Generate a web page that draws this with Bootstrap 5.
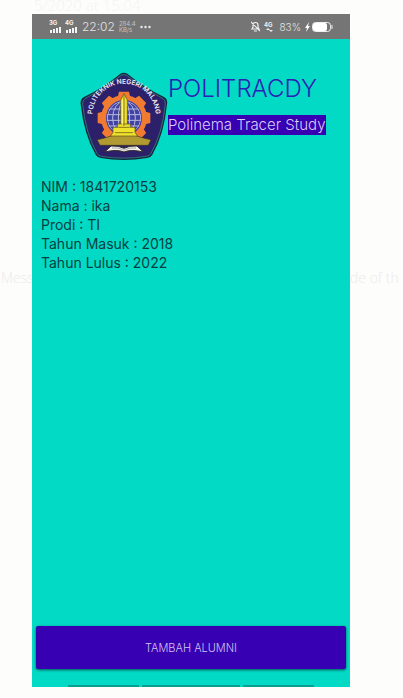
<!DOCTYPE html>
<html lang="id">
<head>
<meta charset="utf-8">
<meta name="viewport" content="width=device-width, initial-scale=1">
<title>Politracdy</title>
<link href="https://cdn.jsdelivr.net/npm/bootstrap@5.3.0/dist/css/bootstrap.min.css" rel="stylesheet">
<style>
  body { background: #fdfdfc; font-family: Inter, "Liberation Sans", sans-serif; color: #063f42; }
  .page { padding: 14px 0 11px; }
  .wall-top { position: absolute; top: -5px; left: 34px; font: 300 15px/20px "Open Sans", sans-serif; color: #f4f4f4; }
  .gutter { font: 300 14px/20px "Open Sans", sans-serif; color: #ececec; padding-top: 254px; white-space: nowrap; overflow: hidden; }
  .gutter-start { width: 32px; padding-left: 1px; }
  .gutter-end { width: 53px; }
  .phone { background: #03dac5; min-width: 0; }
  .status { background: #757575; color: #e4e4e4; height: 25px; padding: 0 17px; font-size: 11px; line-height: 16px; }
  .clock { font-size: 12px; font-weight: 300; }
  .rate { font-size: 6px; line-height: 6px; color: #c4c4c4; }
  .battery { font-size: 10px; font-weight: 300; }
  .brand { padding: 32px 16px 0 47px; }
  .brand-text { padding-top: 4px; margin-left: -1px; }
  .brand h1 { font-size: 24px; line-height: 28px; font-weight: 300; color: #2c20b5; margin: 0 0 12px; }
  .tagline { background: #3700b3; color: #d9cdf5; font-size: 15px; line-height: 20px; font-weight: 300; margin: 0; white-space: nowrap; }
  .facts { padding: 16px 9px; font-size: 14px; line-height: 19px; font-weight: 400; }
  .add { background: #3700b3; color: #d3c5f0; height: 43px; font-size: 11px; line-height: 16px; font-weight: 300; border: 0; border-radius: 2px; box-shadow: 0 1px 3px #00504f; margin: 0 4px 16px; }
  .add:hover { background: #4310bd; color: #fff; }
  .next-row { height: 2px; padding: 0 36px; gap: 3px; }
  .next-row span { background: #079f91; flex: 8 1 0; }
  .next-row .wide { flex-grow: 11; }
</style>
<script src="https://cdn.jsdelivr.net/npm/bootstrap@5.3.0/dist/js/bootstrap.bundle.min.js"></script>
</head>
<body>
<div class="wall-top" aria-hidden="true">5/2020 at 15:04</div>
<div class="page d-flex min-vh-100 position-relative">
  <div class="gutter gutter-start flex-shrink-0" aria-hidden="true">Mess</div>
  <main class="phone d-flex flex-column flex-grow-1">
    <div class="status d-flex align-items-center justify-content-between">
      <div class="d-flex align-items-center gap-1">
        <svg width="29" height="14" viewBox="0 0 29 14" fill="#f4f4f4" aria-hidden="true">
          <text x="0" y="5" font-size="6" font-weight="700">3G</text>
          <path d="M1 10h2v3H1zM4 9h2v4H4zM7 8h2v5H7zM10 7h2v6h-2z"/>
          <text x="16" y="5" font-size="6" font-weight="700">4G</text>
          <path d="M17 10h2v3h-2zM20 9h2v4h-2zM23 8h2v5h-2zM26 7h2v6h-2z"/>
        </svg>
        <span class="clock">22:02</span>
        <span class="rate">284.4<br>KB/s</span>
        <svg width="11" height="4" viewBox="0 0 11 4" fill="#eee" aria-hidden="true"><circle cx="1.5" cy="2" r="1.2"/><circle cx="5.5" cy="2" r="1.2"/><circle cx="9.5" cy="2" r="1.2"/></svg>
      </div>
      <div class="d-flex align-items-center gap-1">
        <svg width="9" height="11" viewBox="0 0 9 11" fill="none" stroke="#f0f0f0" stroke-width="1.2" aria-hidden="true"><path d="M1 8h7L7 6V4Q7 1.5 4.5 1.5T2 4v2zM3 10h3M0 1l9 9"/></svg>
        <svg width="11" height="12" viewBox="0 0 11 12" fill="#eee" aria-hidden="true"><text x="0" y="6" font-size="6" font-weight="700">4G</text><path d="M2 9l2-2 2 2zM5 9h4l-2 2z"/></svg>
        <span class="battery">83%</span>
        <svg width="28" height="10" viewBox="0 0 28 10" aria-hidden="true"><path d="M4 0L0 6h2L1 10 5 4H3z" fill="#fff"/><rect x="7.5" y=".5" width="18" height="9" rx="3" fill="none" stroke="#eee"/><rect x="8" y="1" width="14" height="8" rx="2" fill="#fff"/><path d="M27 3v4" stroke="#eee"/></svg>
      </div>
    </div>

    <header class="brand d-flex">
      <svg class="flex-shrink-0" width="90" height="90" viewBox="14 10 270 270" role="img" aria-label="Politeknik Negeri Malang">
        <defs>
          <path id="motto" d="M54 143A95 95 0 0 1 244 143"/>
          <clipPath id="disc"><circle cx="149" cy="151" r="51"/></clipPath>
        </defs>
        <path id="shield" d="M138 18Q148 12 159 18Q209 59 269 88Q281 95 278 110Q269 202 234 261Q229 270 218 271Q148 283 80 271Q69 270 64 261Q29 202 19 110Q17 95 29 88Q89 59 138 18Z" fill="#14263c"/>
        <path d="M140 23Q148 18 157 23Q208 64 266 93Q274 98 273 110Q264 198 230 257Q226 265 217 266Q148 277 81 266Q72 265 68 257Q34 198 25 110Q24 98 32 93Q90 64 140 23Z" fill="#2c206a" stroke="#40988e" stroke-width="2"/>
        <g fill="#f27b32">
          <circle cx="149" cy="151" r="69"/>
          <g id="teeth"><path d="M134 72h30l5 21h-40zM134 230h30l5-21h-40z"/></g>
          <use href="#teeth" transform="rotate(45 149 151)"/>
          <use href="#teeth" transform="rotate(90 149 151)"/>
          <use href="#teeth" transform="rotate(135 149 151)"/>
        </g>
        <circle cx="149" cy="151" r="54" fill="#4142a1"/>
        <g clip-path="url(#disc)" fill="none" stroke="#b9bce0" stroke-width="3">
          <circle cx="149" cy="151" r="50"/><ellipse cx="149" cy="151" rx="34" ry="50"/><ellipse cx="149" cy="151" rx="17" ry="50"/>
          <path d="M98 124h102M94 141h110M94 158h110M98 175h102M149 101v100"/>
        </g>
        <path d="M68 216Q105 209 123 199h52Q193 209 230 216L222 233H77z" fill="#b09a31" stroke="#3b3025" stroke-width="2"/>
        <path d="M116 195v-16h14v-10h9V97l10-19 10 19v72h9v10h14v16l8 10h-82z" fill="#eee22d" stroke="#5b4b1c" stroke-width="2"/>
        <path d="M149 80v95M132 179h34M122 195h54M139 169h20" stroke="#8b761e" stroke-width="3"/>
        <path d="M144 96v75" stroke="#fff887" stroke-width="3"/>
        <path d="M91 253L110 235Q132 233 149 242Q166 233 188 235L207 253Q171 244 149 253Q127 244 91 253Z" fill="#f5f2ed" stroke="#2d2525" stroke-width="3"/>
        <path d="M149 242v11M113 241q19-2 32 5M185 241q-19-2-32 5" fill="none" stroke="#888" stroke-width="2"/>
        <text font-family="Inter, sans-serif" font-size="20" font-weight="600" fill="#f1eff7"><textPath href="#motto" startOffset="50%" text-anchor="middle">POLITEKNIK NEGERI MALANG</textPath></text>
      </svg>
      <div class="brand-text">
        <h1>POLITRACDY</h1>
        <p class="tagline">Polinema Tracer Study</p>
      </div>
    </header>

    <section class="facts flex-grow-1">
      <div>NIM : 1841720153</div>
      <div>Nama : ika</div>
      <div>Prodi : TI</div>
      <div>Tahun Masuk : 2018</div>
      <div>Tahun Lulus : 2022</div>
    </section>

    <button type="button" class="add btn">TAMBAH ALUMNI</button>
    <div class="next-row d-flex" aria-hidden="true"><span></span><span class="wide"></span><span></span></div>
  </main>
  <div class="gutter gutter-end flex-shrink-0" aria-hidden="true">de of th</div>
</div>
</body>
</html>
